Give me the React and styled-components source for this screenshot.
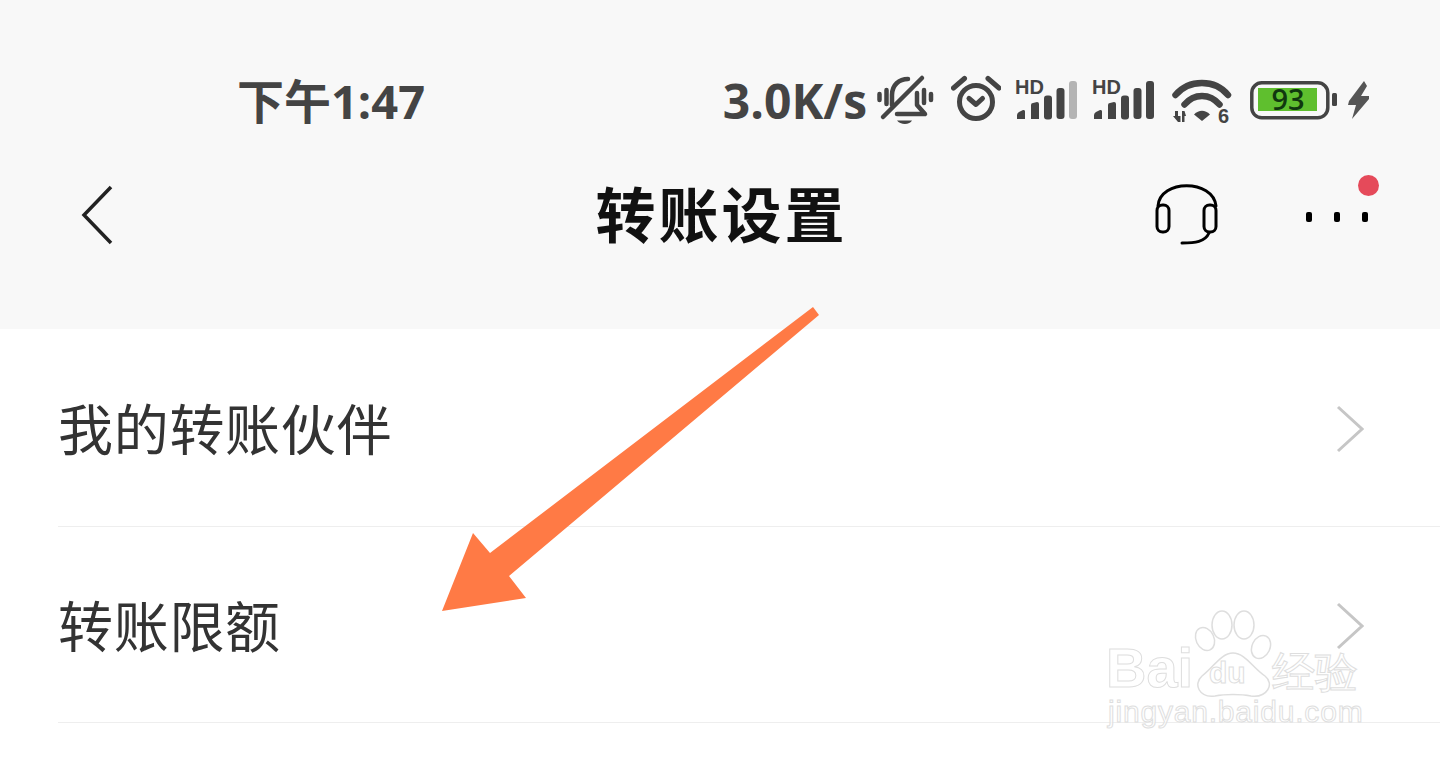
import React from 'react';
import styled, { createGlobalStyle } from 'styled-components';

const GlobalStyle = createGlobalStyle`
  html, body {
    margin: 0;
    padding: 0;
    background: #fff;
  }
  body {
    font-family: "Noto Sans", "Noto Sans CJK SC", sans-serif;
    overflow: hidden;
  }
`;

const Page = styled.div`
  position: relative;
  width: 1440px;
  height: 765px;
  overflow: hidden;
  background: #fff;
`;

const Header = styled.header`
  height: 329px;
  background: #f8f8f8;
`;

const StatusBar = styled.div`
  display: flex;
  justify-content: space-between;
  align-items: center;
  height: 80px;
  padding: 60px 70px 0 237px;
`;

const Time = styled.span`
  margin-bottom: 4px;
  font-family: "Open Sans", "Noto Sans CJK SC", sans-serif;
  font-size: 47px;
  font-weight: 700;
  color: #444;
  white-space: nowrap;
`;

const StatusIcons = styled.div`
  display: flex;
  align-items: center;
`;

const Speed = styled.span`
  font-family: "Open Sans", sans-serif;
  font-size: 48px;
  font-weight: 700;
  color: #444;
  white-space: nowrap;
`;

const StatusIcon = styled.svg`
  display: block;
  flex: none;
  width: ${(p) => p.$w}px;
  height: 52px;
  margin-left: ${(p) => p.$gap}px;
  color: #444;
`;

const NavBar = styled.nav`
  display: grid;
  grid-template-columns: 1fr auto 1fr;
  align-items: center;
  height: 150px;
`;

const BackButton = styled.button`
  justify-self: start;
  display: flex;
  padding: 0;
  margin-left: 81px;
  border: none;
  background: none;
`;

const Title = styled.h1`
  margin: 0 0 7px 3px;
  font-family: "Noto Sans CJK SC", sans-serif;
  font-size: 60px;
  font-weight: 700;
  letter-spacing: 3px;
  color: #111;
`;

const NavActions = styled.div`
  justify-self: end;
  display: flex;
  align-items: center;
  gap: 87px;
  padding-right: 72px;
`;

const HeadsetIcon = styled.svg`
  display: block;
  width: 64px;
  height: 64px;
  margin-bottom: 2px;
`;

const MoreButton = styled.div`
  position: relative;
  display: flex;
  gap: 22px;
  padding-top: 4px;
`;

const MoreDot = styled.span`
  width: 6px;
  height: 10px;
  border-radius: 2px;
  background: #000;
`;

const RedBadge = styled.span`
  position: absolute;
  top: -33px;
  right: -11px;
  width: 21px;
  height: 21px;
  border-radius: 50%;
  background: #e54a5a;
`;

const List = styled.div`
  background: #fff;
`;

const Row = styled.div`
  display: flex;
  align-items: center;
  justify-content: space-between;
  height: ${(p) => p.$h}px;
  margin-left: 58px;
  padding: 3px 76px 0 0;
  box-sizing: border-box;
  border-bottom: 1px solid #eeeeee;
`;

const RowLabel = styled.span`
  margin-bottom: 7px;
  font-family: "Noto Sans CJK SC", sans-serif;
  font-size: 55px;
  font-weight: 400;
  letter-spacing: 0.7px;
  color: #333;
`;

const Chevron = styled.svg`
  display: block;
  width: 28px;
  height: 48px;
`;

const ArrowOverlay = styled.svg`
  position: absolute;
  left: 440px;
  top: 305px;
  width: 382px;
  height: 308px;
`;

const Watermark = styled.div`
  position: absolute;
  left: 1106px;
  top: 610px;
  width: 270px;
  font-family: "Liberation Sans", sans-serif;
  color: rgba(255, 255, 255, 0.7);
  -webkit-text-stroke: 1px #dedede;
`;

const WatermarkTop = styled.div`
  display: flex;
  align-items: flex-end;
`;

const WatermarkWord = styled.span`
  font-size: ${(p) => p.$size}px;
  font-weight: ${(p) => p.$weight};
  line-height: 1;
  margin-bottom: ${(p) => p.$drop}px;
  white-space: nowrap;
`;

const Paw = styled.svg`
  display: block;
  flex: none;
  width: 86px;
  height: 88px;
  margin: 0 -5px 0 -2px;
`;

const WatermarkDomain = styled.div`
  padding-left: 2px;
  font-size: 30px;
  font-weight: 400;
  letter-spacing: 0.8px;
  line-height: 28px;
  white-space: nowrap;
`;

const Bell = () => (
  <StatusIcon $w={58} $gap={10} viewBox="0 0 58 52" fill="none" stroke="currentColor" strokeWidth="4.5" strokeLinecap="round">
    <path d="M2.500 20v6M9.500 16v14M47 16v13M54 20v6" />
    <path d="M6 43L45 4" />
    <path d="M15 31V21C15 11 22 5 31 5" />
    <path d="M40 19v12l8 9H20" strokeLinejoin="round" />
    <path d="M20 46.500h15c-2 4.500-12 4.500-15 0z" fill="currentColor" stroke="none" />
  </StatusIcon>
);

const Alarm = () => (
  <StatusIcon $w={50} $gap={16} viewBox="0 0 50 52" fill="none" stroke="currentColor" strokeWidth="5" strokeLinecap="round" strokeLinejoin="round">
    <circle cx="25" cy="28" r="16.500" />
    <path d="M2.500 14L13.500 4.500M37 4.500L48 14" />
    <path d="M18 24.500l7 6 6.500-6" />
  </StatusIcon>
);

const signalBars = [
  'M2 45v-4a4 4 0 0 1 2-3l4-2a1.500 1.500 0 0 1 2 1.500V45z',
  'M16 45V31a2 2 0 0 1 2-2l4-1a2 2 0 0 1 2 2v15z',
];

const Signal = ({ gap, weak }) => (
  <StatusIcon $w={64} $gap={gap} viewBox="0 0 64 52" fill="currentColor">
    <text x="0" y="20" fontFamily="Liberation Sans" fontWeight="700" fontSize="20">HD</text>
    {signalBars.map((d) => <path key={d} d={d} />)}
    <rect x="29" y="21.500" width="8" height="24" rx="3" />
    <rect x="41.500" y="14" width="8" height="31" rx="3" />
    <rect x="54" y="7" width="8" height="38" rx="3" fill={weak ? '#b4b4b4' : 'currentColor'} />
  </StatusIcon>
);

const Wifi = () => (
  <StatusIcon $w={60} $gap={16} viewBox="0 0 60 52" fill="currentColor">
    <path d="M3.500 21C17 5 43 5 56 21M12.500 30.500C22 19 38 19 47.500 30.500" fill="none" stroke="currentColor" strokeWidth="6.500" strokeLinecap="round" />
    <path d="M22 40.500c5-5 11-5 16 0l-8 6.500z" />
    <path d="M3 37h3v5h2.500v6H6L1 42h2zM10 37h2.500L14 42h-1.500v6H10z" />
    <text x="46" y="49" fontFamily="Liberation Sans" fontWeight="700" fontSize="20">6</text>
  </StatusIcon>
);

const Battery = () => (
  <StatusIcon $w={88} $gap={18} viewBox="0 0 88 52">
    <rect x="1.800" y="8.800" width="76" height="35" rx="10" fill="none" stroke="#444" strokeWidth="3.500" />
    <rect x="8" y="14" width="59" height="23" fill="#5fbf2e" />
    <text x="38" y="36" textAnchor="middle" fontFamily="Open Sans" fontWeight="600" fontSize="29" fill="#10380f">93</text>
    <rect x="82" y="19" width="5" height="13" rx="1.500" fill="#444" />
  </StatusIcon>
);

const Bolt = () => (
  <StatusIcon $w={23} $gap={9} viewBox="0 0 23 52" fill="#555">
    <path d="M17 7L2 27l-1 4h8L5 45l17-20v-3h-8l6-10z" />
  </StatusIcon>
);

const Headset = () => (
  <HeadsetIcon viewBox="0 0 64 64" fill="none" stroke="#000" strokeWidth="3" strokeLinecap="round">
    <path d="M3 24C5 -3 58 -3 61 24" />
    <rect x="2" y="23" width="12" height="27" rx="5.500" />
    <rect x="49" y="23" width="12" height="27" rx="5.500" />
    <path d="M54 51C50 60 40 61 27 61" />
  </HeadsetIcon>
);

const ChevronRight = () => (
  <Chevron viewBox="0 0 28 48" fill="none" stroke="#c6c6c6" strokeWidth="3">
    <path d="M2 2l24 22L2 46" />
  </Chevron>
);

export default function App() {
  return (
    <Page>
      <GlobalStyle />
      <Header>
        <StatusBar>
          <Time>下午1:47</Time>
          <StatusIcons>
            <Speed>3.0K/s</Speed>
            <Bell />
            <Alarm />
            <Signal gap={14} weak />
            <Signal gap={13} />
            <Wifi />
            <Battery />
            <Bolt />
          </StatusIcons>
        </StatusBar>
        <NavBar>
          <BackButton>
            <svg width="32" height="60" viewBox="0 0 32 60" fill="none" stroke="#222" strokeWidth="3.500">
              <path d="M30 2L3 30l27 28" />
            </svg>
          </BackButton>
          <Title>转账设置</Title>
          <NavActions>
            <Headset />
            <MoreButton>
              <MoreDot />
              <MoreDot />
              <MoreDot />
              <RedBadge />
            </MoreButton>
          </NavActions>
        </NavBar>
      </Header>
      <List>
        <Row $h={198}>
          <RowLabel>我的转账伙伴</RowLabel>
          <ChevronRight />
        </Row>
        <Row $h={196}>
          <RowLabel>转账限额</RowLabel>
          <ChevronRight />
        </Row>
      </List>
      <ArrowOverlay viewBox="440 305 382 308">
        <polygon fill="#ff7a45" points="813,307 819,315 509,576 526,598 442,611 473,533 490,553" />
      </ArrowOverlay>
      <Watermark>
        <WatermarkTop>
          <WatermarkWord $size={56} $weight={700} $drop={2}>Bai</WatermarkWord>
          <Paw viewBox="0 0 86 88" fill="#fff" stroke="#dedede" strokeWidth="1.500">
            <ellipse cx="14" cy="29" rx="9" ry="12" transform="rotate(-25 14 29)" />
            <ellipse cx="31" cy="15" rx="10" ry="14" />
            <ellipse cx="53" cy="15" rx="10" ry="14" />
            <ellipse cx="70" cy="37" rx="9" ry="12" transform="rotate(25 70 37)" />
            <path d="M42 43C30 43 22 58 11 66C2 74 8 88 24 86C34 84 50 84 60 86C76 88 84 74 74 66C62 58 54 43 42 43z" />
            <text x="18" y="73" fontFamily="Liberation Sans" fontWeight="700" fontSize="30" strokeWidth="1">du</text>
          </Paw>
          <WatermarkWord $size={43} $weight={400} $drop={4}>经验</WatermarkWord>
        </WatermarkTop>
        <WatermarkDomain>jingyan.baidu.com</WatermarkDomain>
      </Watermark>
    </Page>
  );
}
